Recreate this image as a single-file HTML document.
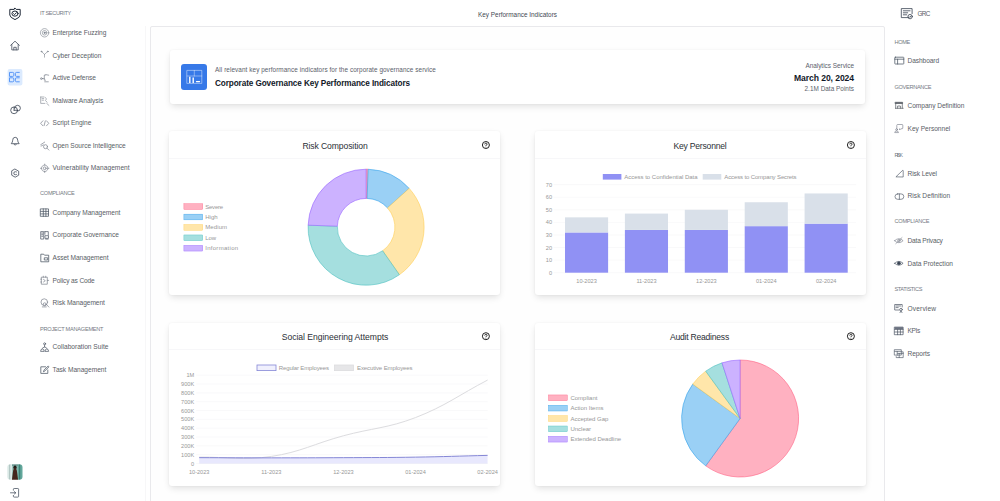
<!DOCTYPE html>
<html><head><meta charset="utf-8"><title>Key Performance Indicators</title>
<style>
html,body{margin:0;padding:0;}
body{width:1000px;height:501px;position:relative;overflow:hidden;background:#fff;font-family:"Liberation Sans", sans-serif;}
.t{position:absolute;white-space:pre;line-height:10px;height:10px;font-family:"Liberation Sans", sans-serif;}
.abs{position:absolute;}
.card{position:absolute;background:#fff;border-radius:3px;box-shadow:0 3px 7px -1px rgba(0,0,0,0.13),0 0 2px rgba(0,0,0,0.05);}
svg{position:absolute;overflow:visible;}

</style></head><body>
<div class="abs" style="left:150px;top:26px;width:733px;height:480px;background:#fefefe;border:1px solid #e9e9ec;border-radius:2px 2px 0 0;"></div>
<div class="abs" style="left:145px;top:26px;width:1px;height:480px;background:#f7f7f8;"></div>
<div class="card" style="left:169.5px;top:50px;width:695.5px;height:54px;"></div>
<div class="abs" style="left:181px;top:64px;width:26px;height:26px;background:#3779e8;border-radius:3px;"></div>
<div class="card" style="left:169.3px;top:131.0px;width:330.5px;height:164.0px;"></div>
<div class="abs" style="left:169.3px;top:157.5px;width:330.5px;height:1px;background:#f7f7f9;"></div>
<div class="card" style="left:535.0px;top:131.0px;width:330.5px;height:164.0px;"></div>
<div class="abs" style="left:535.0px;top:157.5px;width:330.5px;height:1px;background:#f7f7f9;"></div>
<div class="card" style="left:169.3px;top:322.6px;width:330.5px;height:163.4px;"></div>
<div class="abs" style="left:169.3px;top:349.1px;width:330.5px;height:1px;background:#f7f7f9;"></div>
<div class="card" style="left:535.0px;top:322.6px;width:330.5px;height:163.4px;"></div>
<div class="abs" style="left:535.0px;top:349.1px;width:330.5px;height:1px;background:#f7f7f9;"></div>
<svg width="1000" height="501" viewBox="0 0 1000 501" style="left:0;top:0"><path d="M366.10 169.20 A58.00 58.00 0 0 1 368.12 169.24 L367.11 198.42 A28.80 28.80 0 0 0 366.10 198.40 Z" fill="#ffb1c1" stroke="#ff6384" stroke-width="0.6" stroke-linejoin="round"/><path d="M368.12 169.24 A58.00 58.00 0 0 1 409.20 188.39 L387.50 207.93 A28.80 28.80 0 0 0 367.11 198.42 Z" fill="#9ad0f5" stroke="#36a2eb" stroke-width="0.6" stroke-linejoin="round"/><path d="M409.20 188.39 A58.00 58.00 0 0 1 399.37 274.71 L382.62 250.79 A28.80 28.80 0 0 0 387.50 207.93 Z" fill="#ffe6aa" stroke="#ffce56" stroke-width="0.6" stroke-linejoin="round"/><path d="M399.37 274.71 A58.00 58.00 0 0 1 308.14 225.18 L337.32 226.19 A28.80 28.80 0 0 0 382.62 250.79 Z" fill="#a5dfdf" stroke="#4bc0c0" stroke-width="0.6" stroke-linejoin="round"/><path d="M308.14 225.18 A58.00 58.00 0 0 1 366.10 169.20 L366.10 198.40 A28.80 28.80 0 0 0 337.32 226.19 Z" fill="#ccb2ff" stroke="#9966ff" stroke-width="0.6" stroke-linejoin="round"/><rect x="183.90" y="203.75" width="18.80" height="5.70" fill="#ffb1c1" stroke="#ff6384" stroke-width="0.4"/><rect x="183.90" y="214.15" width="18.80" height="5.70" fill="#9ad0f5" stroke="#36a2eb" stroke-width="0.4"/><rect x="183.90" y="224.55" width="18.80" height="5.70" fill="#ffe6aa" stroke="#ffce56" stroke-width="0.4"/><rect x="183.90" y="234.95" width="18.80" height="5.70" fill="#a5dfdf" stroke="#4bc0c0" stroke-width="0.4"/><rect x="183.90" y="245.35" width="18.80" height="5.70" fill="#ccb2ff" stroke="#9966ff" stroke-width="0.4"/><path d="M740.10 418.50 L740.10 360.00 A58.50 58.50 0 1 1 705.71 465.83 Z" fill="#ffb1c1" stroke="#ff6384" stroke-width="0.6" stroke-linejoin="round"/><path d="M740.10 418.50 L705.71 465.83 A58.50 58.50 0 0 1 692.77 384.11 Z" fill="#9ad0f5" stroke="#36a2eb" stroke-width="0.6" stroke-linejoin="round"/><path d="M740.10 418.50 L692.77 384.11 A58.50 58.50 0 0 1 705.71 371.17 Z" fill="#ffe6aa" stroke="#ffce56" stroke-width="0.6" stroke-linejoin="round"/><path d="M740.10 418.50 L705.71 371.17 A58.50 58.50 0 0 1 722.02 362.86 Z" fill="#a5dfdf" stroke="#4bc0c0" stroke-width="0.6" stroke-linejoin="round"/><path d="M740.10 418.50 L722.02 362.86 A58.50 58.50 0 0 1 740.10 360.00 Z" fill="#ccb2ff" stroke="#9966ff" stroke-width="0.6" stroke-linejoin="round"/><rect x="548.50" y="394.95" width="18.80" height="5.70" fill="#ffb1c1" stroke="#ff6384" stroke-width="0.4"/><rect x="548.50" y="405.30" width="18.80" height="5.70" fill="#9ad0f5" stroke="#36a2eb" stroke-width="0.4"/><rect x="548.50" y="415.65" width="18.80" height="5.70" fill="#ffe6aa" stroke="#ffce56" stroke-width="0.4"/><rect x="548.50" y="426.00" width="18.80" height="5.70" fill="#a5dfdf" stroke="#4bc0c0" stroke-width="0.4"/><rect x="548.50" y="436.35" width="18.80" height="5.70" fill="#ccb2ff" stroke="#9966ff" stroke-width="0.4"/><line x1="553.60" y1="272.70" x2="856.10" y2="272.70" stroke="#f3f3f5" stroke-width="0.5"/><line x1="553.60" y1="260.12" x2="856.10" y2="260.12" stroke="#f3f3f5" stroke-width="0.5"/><line x1="553.60" y1="247.54" x2="856.10" y2="247.54" stroke="#f3f3f5" stroke-width="0.5"/><line x1="553.60" y1="234.96" x2="856.10" y2="234.96" stroke="#f3f3f5" stroke-width="0.5"/><line x1="553.60" y1="222.38" x2="856.10" y2="222.38" stroke="#f3f3f5" stroke-width="0.5"/><line x1="553.60" y1="209.80" x2="856.10" y2="209.80" stroke="#f3f3f5" stroke-width="0.5"/><line x1="553.60" y1="197.22" x2="856.10" y2="197.22" stroke="#f3f3f5" stroke-width="0.5"/><line x1="553.60" y1="184.64" x2="856.10" y2="184.64" stroke="#f3f3f5" stroke-width="0.5"/><rect x="564.99" y="232.44" width="43.13" height="40.26" fill="#9091f4"/><rect x="564.99" y="217.35" width="43.13" height="15.10" fill="#d9e0e9"/><rect x="624.89" y="229.93" width="43.13" height="42.77" fill="#9091f4"/><rect x="624.89" y="213.57" width="43.13" height="16.35" fill="#d9e0e9"/><rect x="684.79" y="229.93" width="43.13" height="42.77" fill="#9091f4"/><rect x="684.79" y="209.80" width="43.13" height="20.13" fill="#d9e0e9"/><rect x="744.69" y="226.15" width="43.13" height="46.55" fill="#9091f4"/><rect x="744.69" y="202.25" width="43.13" height="23.90" fill="#d9e0e9"/><rect x="804.59" y="223.64" width="43.13" height="49.06" fill="#9091f4"/><rect x="804.59" y="193.45" width="43.13" height="30.19" fill="#d9e0e9"/><rect x="602.8" y="174" width="18.6" height="5.6" fill="#9091f4"/><rect x="702.7" y="174" width="18.6" height="5.6" fill="#d9e0e9"/><line x1="196.20" y1="463.50" x2="487.60" y2="463.50" stroke="#f3f3f5" stroke-width="0.5"/><line x1="196.20" y1="454.67" x2="487.60" y2="454.67" stroke="#f3f3f5" stroke-width="0.5"/><line x1="196.20" y1="445.84" x2="487.60" y2="445.84" stroke="#f3f3f5" stroke-width="0.5"/><line x1="196.20" y1="437.01" x2="487.60" y2="437.01" stroke="#f3f3f5" stroke-width="0.5"/><line x1="196.20" y1="428.18" x2="487.60" y2="428.18" stroke="#f3f3f5" stroke-width="0.5"/><line x1="196.20" y1="419.35" x2="487.60" y2="419.35" stroke="#f3f3f5" stroke-width="0.5"/><line x1="196.20" y1="410.52" x2="487.60" y2="410.52" stroke="#f3f3f5" stroke-width="0.5"/><line x1="196.20" y1="401.69" x2="487.60" y2="401.69" stroke="#f3f3f5" stroke-width="0.5"/><line x1="196.20" y1="392.86" x2="487.60" y2="392.86" stroke="#f3f3f5" stroke-width="0.5"/><line x1="196.20" y1="384.03" x2="487.60" y2="384.03" stroke="#f3f3f5" stroke-width="0.5"/><line x1="196.20" y1="375.20" x2="487.60" y2="375.20" stroke="#f3f3f5" stroke-width="0.5"/><path d="M199.20 457.14 C228.04 456.86 243.03 460.63 271.30 456.44 C300.71 452.08 314.44 443.58 343.40 435.77 C372.12 428.04 387.94 428.23 415.50 417.58 C445.62 405.94 458.76 395.07 487.60 380.06" fill="none" stroke="#dcdcdf" stroke-width="1"/><path d="M199.20 457.67 C228.04 457.74 242.46 457.85 271.30 457.85 C300.14 457.85 314.56 457.81 343.40 457.67 C372.24 457.53 386.66 457.60 415.50 457.14 C444.34 456.68 458.76 456.08 487.60 455.38 L487.60 463.50 L199.20 463.50 Z" fill="rgba(99,102,241,0.15)" stroke="none"/><path d="M199.20 457.67 C228.04 457.74 242.46 457.85 271.30 457.85 C300.14 457.85 314.56 457.81 343.40 457.67 C372.24 457.53 386.66 457.60 415.50 457.14 C444.34 456.68 458.76 456.08 487.60 455.38" fill="none" stroke="#8587d6" stroke-width="1"/><rect x="257" y="365" width="19" height="5.6" fill="#f0f0fd" stroke="#8587d6" stroke-width="0.8"/><rect x="334.5" y="365" width="19" height="5.6" fill="#e6e6e8" stroke="#dcdcdf" stroke-width="0.8"/><circle cx="485.90" cy="145.00" r="3.5" fill="none" stroke="#222" stroke-width="1.0"/><path d="M484.70 144.40 q0 -1.3 1.2 -1.3 q1.2 0 1.2 1.1 q0 0.8 -1.2 1.2 v0.6" fill="none" stroke="#222" stroke-width="0.85"/><circle cx="485.90" cy="147.00" r="0.45" fill="#222"/><circle cx="850.90" cy="145.00" r="3.5" fill="none" stroke="#222" stroke-width="1.0"/><path d="M849.70 144.40 q0 -1.3 1.2 -1.3 q1.2 0 1.2 1.1 q0 0.8 -1.2 1.2 v0.6" fill="none" stroke="#222" stroke-width="0.85"/><circle cx="850.90" cy="147.00" r="0.45" fill="#222"/><circle cx="485.90" cy="336.20" r="3.5" fill="none" stroke="#222" stroke-width="1.0"/><path d="M484.70 335.60 q0 -1.3 1.2 -1.3 q1.2 0 1.2 1.1 q0 0.8 -1.2 1.2 v0.6" fill="none" stroke="#222" stroke-width="0.85"/><circle cx="485.90" cy="338.20" r="0.45" fill="#222"/><circle cx="850.90" cy="336.20" r="3.5" fill="none" stroke="#222" stroke-width="1.0"/><path d="M849.70 335.60 q0 -1.3 1.2 -1.3 q1.2 0 1.2 1.1 q0 0.8 -1.2 1.2 v0.6" fill="none" stroke="#222" stroke-width="0.85"/><circle cx="850.90" cy="338.20" r="0.45" fill="#222"/></svg>
<svg width="1000" height="501" viewBox="0 0 1000 501" style="left:0;top:0"><g transform="translate(9.00 7.80)" fill="none" stroke="#1f2937" stroke-width="1.0" stroke-linecap="round" stroke-linejoin="round" ><path d="M6 0.4 L7.2 1.6 L11.2 1.6 L11.2 7.2 Q11.2 9.6 6 11.8 Q0.8 9.6 0.8 7.2 L0.8 1.6 L4.8 1.6 Z"/><ellipse cx="6" cy="5.8" rx="3.1" ry="2.6"/><path d="M4.6 5.9 L5.6 6.8 L7.5 4.8"/></g><g transform="translate(10.20 40.70)" fill="none" stroke="#4b5563" stroke-width="0.85" stroke-linecap="round" stroke-linejoin="round" ><path d="M0.4 4.6 L4.8 0.5 L9.2 4.6 M1.6 3.8 V9.2 H8 V3.8 M3.6 9.2 V6.6 H6 V9.2"/></g><rect x="7.6" y="69" width="14.8" height="16.4" rx="2" fill="#dbeafe"/><g transform="translate(9.90 72.40)" fill="none" stroke="#4a8df6" stroke-width="0.9" stroke-linecap="round" stroke-linejoin="round" ><path d="M0.0 0.0 h2.8 q1.1 0 1.1 1.1 v1.8 q0 1.1 -1.1 1.1 h-2.8 Z"/><path d="M9.4 0.0 h-2.8 q-1.1 0 -1.1 1.1 v1.8 q0 1.1 1.1 1.1 h2.8"/><path d="M0.0 5.4 h2.8 q1.1 0 1.1 1.1 v1.8 q0 1.1 -1.1 1.1 h-2.8 Z"/><path d="M9.4 5.4 h-2.8 q-1.1 0 -1.1 1.1 v1.8 q0 1.1 1.1 1.1 h2.8"/></g><g transform="translate(10.20 104.90)" fill="none" stroke="#374151" stroke-width="0.8" stroke-linecap="round" stroke-linejoin="round" ><circle cx="3.9" cy="5.4" r="3.4"/><path d="M4.4 3.4 A2.9 2.9 0 1 1 7.2 6.2 M3.9 5.4 V2.4 M3.9 5.4 H7"/></g><g transform="translate(10.90 136.80)" fill="none" stroke="#4b5563" stroke-width="0.85" stroke-linecap="round" stroke-linejoin="round" ><path d="M0.6 6.6 Q1.8 5.4 1.8 3.4 Q1.8 0.5 4.3 0.5 Q6.8 0.5 6.8 3.4 Q6.8 5.4 8 6.6 Z M3.2 7.8 Q4.3 8.8 5.4 7.8"/></g><g transform="translate(10.90 168.90)" fill="none" stroke="#4b5563" stroke-width="0.85" stroke-linecap="round" stroke-linejoin="round" ><path d="M4.3 0.3 L7.8 2.3 L7.8 6.3 L4.3 8.3 L0.8 6.3 L0.8 2.3 Z"/><path d="M5.6 3 Q4.3 2.4 3.2 3.2 Q2.6 4.3 3.2 5.4 Q4.3 6.2 5.6 5.6"/></g><defs><clipPath id="av"><rect x="7.3" y="464.2" width="15.2" height="15.6" rx="3.2"/></clipPath><filter id="bl" x="-20%" y="-20%" width="140%" height="140%"><feGaussianBlur stdDeviation="0.55"/></filter></defs><g clip-path="url(#av)"><g filter="url(#bl)"><rect x="5" y="462" width="20" height="20" fill="#9cc7be"/><rect x="5" y="462" width="7" height="20" fill="#dbe9e6"/><rect x="9.2" y="462" width="1" height="20" fill="#a9bfbc"/><rect x="17.6" y="462" width="8" height="20" fill="#62a79b"/><rect x="19" y="462" width="1.2" height="20" fill="#3f7f75"/><rect x="12" y="463" width="6" height="3" fill="#6f9a94"/><ellipse cx="15" cy="467.6" rx="1.7" ry="2.2" fill="#1f1a18"/><path d="M15 467 Q13.2 469 12.8 473 L11.8 481 H18.2 L17.2 473 Q16.8 469 15 467 Z" fill="#45261c"/></g></g><g transform="translate(10.00 488.00)" fill="none" stroke="#4b5563" stroke-width="0.8" stroke-linecap="round" stroke-linejoin="round" ><path d="M3.4 2.2 V1.2 Q3.4 0.5 4.2 0.5 H7.8 Q8.6 0.5 8.6 1.2 V8.4 Q8.6 9.1 7.8 9.1 H4.2 Q3.4 9.1 3.4 8.4 V7.4"/><path d="M0.5 4.8 H5.6 M4.4 3.6 L5.8 4.8 L4.4 6"/></g><g transform="translate(40.10 28.20)" fill="none" stroke="#7b818c" stroke-width="0.6" stroke-linecap="round" stroke-linejoin="round" ><circle cx="4.5" cy="4.6" r="4.2"/><circle cx="4.5" cy="4.6" r="2.3"/><circle cx="4.5" cy="4.6" r="0.7" fill="#7b818c"/></g><g transform="translate(40.10 50.80)" fill="none" stroke="#7b818c" stroke-width="0.6" stroke-linecap="round" stroke-linejoin="round" ><path d="M1.6 0.9 L4.4 3.6 L7.4 0.9 M4.4 3.6 V6.4"/><circle cx="1.3" cy="0.7" r="0.5"/><circle cx="7.7" cy="0.7" r="0.5"/></g><g transform="translate(40.10 73.40)" fill="none" stroke="#7b818c" stroke-width="0.7" stroke-linecap="round" stroke-linejoin="round" ><circle cx="1.3" cy="5.2" r="0.9"/><path d="M2.4 5.2 H4 M5.6 1.6 H4.2 V6.8 H5.4 M5.8 1.2 L8.6 1.8 M4.6 8.4 H8.2"/></g><g transform="translate(40.10 96.00)" fill="none" stroke="#7b818c" stroke-width="0.6" stroke-linecap="round" stroke-linejoin="round" ><path d="M0.6 1 H3.4 M4.6 1 L6 2.4 V3.6 M0.6 1 V7.4 H4.8 M2 2.6 H3.6 M2 4.2 H3.4 M5.2 4.4 L7 6.2 M6.6 7.4 L8.8 9.4"/></g><g transform="translate(40.10 118.60)" fill="none" stroke="#7b818c" stroke-width="0.7" stroke-linecap="round" stroke-linejoin="round" ><path d="M2.8 2.2 L0.5 4.7 L2.8 7.2 M6.4 2.2 L8.7 4.7 L6.4 7.2 M5.2 2.4 L4 7"/></g><g transform="translate(40.10 141.10)" fill="none" stroke="#7b818c" stroke-width="0.7" stroke-linecap="round" stroke-linejoin="round" ><path d="M0.6 3.6 L4.6 1 M1 5 L3.2 3.8"/><circle cx="5.4" cy="5.6" r="2"/><path d="M6.9 7.1 L8.8 9"/></g><g transform="translate(40.10 163.70)" fill="none" stroke="#7b818c" stroke-width="0.7" stroke-linecap="round" stroke-linejoin="round" ><circle cx="4.6" cy="4.6" r="3.2" stroke-dasharray="1.6 0.9"/><circle cx="4.6" cy="4.6" r="1.4"/><path d="M4.6 0.4 V1.4 M4.6 7.8 V8.8 M0.4 4.6 H1.4 M7.8 4.6 H8.8"/></g><g transform="translate(40.30 208.30)" fill="none" stroke="#4b5563" stroke-width="0.75" stroke-linecap="round" stroke-linejoin="round" ><rect x="0.4" y="0.6" width="7.8" height="7.4"/><path d="M3 0.6 V8 M5.6 0.6 V8 M0.4 3.1 H8.2 M0.4 5.6 H8.2"/></g><g transform="translate(40.30 231.10)" fill="none" stroke="#4b5563" stroke-width="0.7" stroke-linecap="round" stroke-linejoin="round" ><path d="M0.4 7.6 V0.5 H3.4 V7.6 Z M4.6 0.5 H8 V4 M4.6 0.5 V3.2"/><rect x="5" y="4.6" width="3.2" height="2.6"/><path d="M1.4 2 H2.4 M1.4 3.6 H2.4 M1.4 5.2 H2.4 M5.4 8 H7.8"/></g><g transform="translate(40.30 253.40)" fill="none" stroke="#4b5563" stroke-width="0.75" stroke-linecap="round" stroke-linejoin="round" ><path d="M0.5 8 V0.8 H3.4 L4.2 1.8 H8.4 V8 Z"/><rect x="4.4" y="4.4" width="3" height="2.2"/></g><g transform="translate(40.30 275.80)" fill="none" stroke="#7b818c" stroke-width="0.7" stroke-linecap="round" stroke-linejoin="round" ><path d="M1.4 1.4 H7 V8.4 H1.4 Z M3 0.4 V1.4 M5.4 0.4 V1.4 M0.4 3.4 H1.4 M0.4 6.2 H1.4 M7 4.6 H8.4"/><path d="M3.2 3.6 L5 4.9 L3.2 6.2"/></g><g transform="translate(40.30 298.30)" fill="none" stroke="#7b818c" stroke-width="0.7" stroke-linecap="round" stroke-linejoin="round" ><circle cx="4" cy="3.8" r="3.3"/><circle cx="4.4" cy="6" r="1.5"/><path d="M6.4 6.4 L8.6 8.8 M2 8.6 H6"/></g><g transform="translate(40.20 342.40)" fill="none" stroke="#4b5563" stroke-width="0.7" stroke-linecap="round" stroke-linejoin="round" ><circle cx="4.4" cy="1.4" r="1"/><path d="M4.4 2.6 V4.6 M2 6 L4.4 4.4 L6.8 6"/><path d="M0.4 8.6 Q0.4 6.6 2.2 6.6 Q4 6.6 4 8.6 Z M4.8 8.6 Q4.8 6.6 6.6 6.6 Q8.4 6.6 8.4 8.6 Z"/></g><g transform="translate(40.20 365.40)" fill="none" stroke="#4b5563" stroke-width="0.75" stroke-linecap="round" stroke-linejoin="round" ><path d="M5.4 1.4 H0.6 V8 H7.6 V4.6"/><path d="M3.4 6 L4 4.4 L8 0.6 L8.8 1.4 L4.8 5.4 Z"/></g><g transform="translate(900.70 8.00)" fill="none" stroke="#374151" stroke-width="0.8" stroke-linecap="round" stroke-linejoin="round" ><path d="M8 9.6 H0.6 V0.6 H11.4 V5.6"/><path d="M2.6 2.8 H9.4 M2.6 4.8 H7 M2.6 6.8 H6"/><circle cx="9.4" cy="8.6" r="2.2"/><path d="M8.4 8.6 L9.2 9.4 L10.4 7.8"/></g><g transform="translate(894.40 56.80)" fill="none" stroke="#4b5563" stroke-width="0.75" stroke-linecap="round" stroke-linejoin="round" ><rect x="0.4" y="0.4" width="9" height="6.8" rx="0.5"/><path d="M0.4 2.4 H9.4 M3.2 2.4 V7.2"/></g><g transform="translate(895.00 101.80)" fill="none" stroke="#555a62" stroke-width="0.7" stroke-linecap="round" stroke-linejoin="round" ><path d="M0.4 0.5 H7.6 V1.7 H0.4 Z" fill="#555a62"/><path d="M0.7 1.8 V6.4 M7.3 1.8 V6.4 M0.4 6.5 H8.2 M2.6 6.4 V4.2 H5.4 V6.4"/></g><g transform="translate(894.20 124.00)" fill="none" stroke="#7b818c" stroke-width="0.65" stroke-linecap="round" stroke-linejoin="round" ><path d="M2.6 4.8 V1.2 Q2.6 0.5 3.4 0.5 H7.8 Q8.6 0.5 8.6 1.2 V4 Q8.6 4.8 7.8 4.8 H6.6 L5.4 6 V4.8"/><circle cx="2.4" cy="5.6" r="0.9"/><path d="M0.5 8.2 Q0.5 7 2.4 7 Q4.3 7 4.3 8.2 Z"/></g><g transform="translate(895.60 169.60)" fill="none" stroke="#4b5563" stroke-width="0.65" stroke-linecap="round" stroke-linejoin="round" ><path d="M0.6 7 L7 0.8 Q7.6 0.4 7.6 1.2 V7 Z"/></g><g transform="translate(894.60 193.40)" fill="none" stroke="#4b5563" stroke-width="0.65" stroke-linecap="round" stroke-linejoin="round" ><rect x="0.4" y="0.5" width="8.8" height="5.4" rx="2.7"/><path d="M4.8 0.6 V5.8"/></g><g transform="translate(894.20 236.40)" fill="none" stroke="#7b818c" stroke-width="0.65" stroke-linecap="round" stroke-linejoin="round" ><path d="M0.5 4.3 Q4.6 0.2 8.9 4.3 Q4.6 8.4 0.5 4.3 Z M1.6 7.2 L7.8 1.2"/><circle cx="4.7" cy="4.3" r="1.2"/></g><g transform="translate(894.20 259.00)" fill="none" stroke="#4b5563" stroke-width="0.7" stroke-linecap="round" stroke-linejoin="round" ><path d="M0.5 4.3 Q4.6 0.4 8.9 4.3 Q4.6 8.2 0.5 4.3 Z"/><circle cx="4.7" cy="4.3" r="1.5" fill="#374151"/></g><g transform="translate(894.20 304.00)" fill="none" stroke="#4b5563" stroke-width="0.7" stroke-linecap="round" stroke-linejoin="round" ><path d="M5 6 H0.5 V0.5 H8 V3"/><path d="M1.8 2 H6.4 M1.8 3.6 H4"/><circle cx="6.8" cy="5.6" r="1.3"/><path d="M5.8 8.6 L6.8 6.9 L7.8 8.6"/></g><g transform="translate(894.20 326.60)" fill="none" stroke="#4b5563" stroke-width="0.7" stroke-linecap="round" stroke-linejoin="round" ><rect x="0.5" y="0.5" width="8.4" height="7.6"/><path d="M0.5 2.8 H8.9 M3.4 2.8 V8.1 M6.2 2.8 V8.1 M0.5 5.4 H8.9"/><path d="M0.5 0.5 H8.9 V2.8 H0.5 Z" fill="#6b7280" stroke="none"/></g><g transform="translate(894.20 349.20)" fill="none" stroke="#4b5563" stroke-width="0.65" stroke-linecap="round" stroke-linejoin="round" ><rect x="0.5" y="0.5" width="6.6" height="5.4"/><path d="M2 7.4 V8.4 H9 V2.6 H7.8 M0.5 2.2 H7.1 M3 2.2 V5.9 M3.4 4.2 H9 M5 4.2 V8.4"/></g><g transform="translate(186.80 70.00)" fill="none" stroke="#fff" stroke-width="0.8" stroke-linecap="round" stroke-linejoin="round" ><rect x="0.4" y="0.4" width="14.6" height="13" stroke="rgba(255,255,255,0.55)"/><path d="M7.5 0.4 V6 M0.4 6 H15" stroke="rgba(255,255,255,0.5)"/><path d="M3 6.8 V13 M6.4 7.4 V13" stroke="#fff" stroke-width="1.4" stroke-linecap="butt"/><path d="M9.6 11.6 H12.8" stroke="#fff" stroke-width="1.1"/></g></svg>
<div class="t" style="left:40.00px;top:8.40px;font-size:5.6px;color:#757a84;letter-spacing:-0.338px;">IT SECURITY</div>
<div class="t" style="left:52.60px;top:27.70px;font-size:6.6px;color:#595e66;letter-spacing:-0.071px;">Enterprise Fuzzing</div>
<div class="t" style="left:52.60px;top:50.90px;font-size:6.6px;color:#595e66;letter-spacing:-0.028px;">Cyber Deception</div>
<div class="t" style="left:52.60px;top:72.90px;font-size:6.6px;color:#595e66;letter-spacing:-0.083px;">Active Defense</div>
<div class="t" style="left:52.60px;top:95.50px;font-size:6.6px;color:#595e66;letter-spacing:-0.015px;">Malware Analysis</div>
<div class="t" style="left:52.60px;top:118.10px;font-size:6.6px;color:#595e66;letter-spacing:-0.040px;">Script Engine</div>
<div class="t" style="left:52.60px;top:140.60px;font-size:6.6px;color:#595e66;letter-spacing:-0.039px;">Open Source Intelligence</div>
<div class="t" style="left:52.60px;top:163.20px;font-size:6.6px;color:#595e66;letter-spacing:0.046px;">Vulnerability Management</div>
<div class="t" style="left:52.60px;top:207.60px;font-size:6.6px;color:#595e66;letter-spacing:-0.047px;">Company Management</div>
<div class="t" style="left:52.60px;top:230.10px;font-size:6.6px;color:#595e66;letter-spacing:-0.044px;">Corporate Governance</div>
<div class="t" style="left:52.60px;top:252.70px;font-size:6.6px;color:#595e66;letter-spacing:-0.063px;">Asset Management</div>
<div class="t" style="left:52.60px;top:275.80px;font-size:6.6px;color:#595e66;letter-spacing:-0.142px;">Policy as Code</div>
<div class="t" style="left:52.60px;top:297.80px;font-size:6.6px;color:#595e66;letter-spacing:-0.063px;">Risk Management</div>
<div class="t" style="left:52.60px;top:342.40px;font-size:6.6px;color:#595e66;letter-spacing:0.004px;">Collaboration Suite</div>
<div class="t" style="left:52.60px;top:365.00px;font-size:6.6px;color:#595e66;letter-spacing:-0.013px;">Task Management</div>
<div class="t" style="left:40.00px;top:188.40px;font-size:5.6px;color:#757a84;letter-spacing:-0.250px;">COMPLIANCE</div>
<div class="t" style="left:40.00px;top:323.60px;font-size:5.6px;color:#757a84;letter-spacing:-0.242px;">PROJECT MANAGEMENT</div>
<div class="t" style="left:478.00px;top:9.50px;font-size:6.4px;color:#444a53;letter-spacing:0.005px;">Key Performance Indicators</div>
<div class="t" style="left:917.40px;top:8.70px;font-size:6.4px;color:#595e66;letter-spacing:-0.634px;">GRC</div>
<div class="t" style="left:894.40px;top:37.00px;font-size:5.6px;color:#757a84;letter-spacing:-0.295px;">HOME</div>
<div class="t" style="left:894.40px;top:81.50px;font-size:5.6px;color:#757a84;letter-spacing:-0.290px;">GOVERNANCE</div>
<div class="t" style="left:894.40px;top:149.50px;font-size:5.6px;color:#757a84;letter-spacing:-1.466px;">RISK</div>
<div class="t" style="left:894.40px;top:216.30px;font-size:5.6px;color:#757a84;letter-spacing:-0.200px;">COMPLIANCE</div>
<div class="t" style="left:894.40px;top:284.20px;font-size:5.6px;color:#757a84;letter-spacing:-0.390px;">STATISTICS</div>
<div class="t" style="left:907.50px;top:55.90px;font-size:6.6px;color:#595e66;letter-spacing:-0.085px;">Dashboard</div>
<div class="t" style="left:907.50px;top:100.90px;font-size:6.6px;color:#595e66;letter-spacing:-0.041px;">Company Definition</div>
<div class="t" style="left:907.50px;top:123.50px;font-size:6.6px;color:#595e66;letter-spacing:-0.007px;">Key Personnel</div>
<div class="t" style="left:907.50px;top:168.80px;font-size:6.6px;color:#595e66;letter-spacing:-0.092px;">Risk Level</div>
<div class="t" style="left:907.50px;top:191.30px;font-size:6.6px;color:#595e66;letter-spacing:0.043px;">Risk Definition</div>
<div class="t" style="left:907.50px;top:236.10px;font-size:6.6px;color:#595e66;letter-spacing:-0.183px;">Data Privacy</div>
<div class="t" style="left:907.50px;top:258.70px;font-size:6.6px;color:#595e66;letter-spacing:0.003px;">Data Protection</div>
<div class="t" style="left:907.50px;top:303.80px;font-size:6.6px;color:#595e66;letter-spacing:0.152px;">Overview</div>
<div class="t" style="left:907.50px;top:326.40px;font-size:6.6px;color:#595e66;letter-spacing:-0.359px;">KPIs</div>
<div class="t" style="left:907.50px;top:349.00px;font-size:6.6px;color:#595e66;letter-spacing:-0.085px;">Reports</div>
<div class="t" style="left:215.00px;top:64.60px;font-size:6.4px;color:#5b616b;letter-spacing:0.066px;">All relevant key performance indicators for the corporate governance service</div>
<div class="t" style="left:215.00px;top:78.80px;font-size:8.2px;color:#111827;font-weight:bold;letter-spacing:-0.101px;">Corporate Governance Key Performance Indicators</div>
<div class="t" style="left:805.40px;top:61.20px;font-size:6.4px;color:#5b616b;letter-spacing:-0.004px;">Analytics Service</div>
<div class="t" style="left:794.00px;top:72.80px;font-size:8.6px;color:#111827;font-weight:bold;letter-spacing:-0.083px;">March 20, 2024</div>
<div class="t" style="left:804.50px;top:83.80px;font-size:6.4px;color:#5b616b;letter-spacing:0.029px;">2.1M Data Points</div>
<div class="t" style="left:302.40px;top:141.10px;font-size:8.6px;color:#2b2f36;letter-spacing:-0.105px;">Risk Composition</div>
<div class="t" style="left:673.45px;top:141.10px;font-size:8.6px;color:#2b2f36;letter-spacing:-0.216px;">Key Personnel</div>
<div class="t" style="left:281.75px;top:332.00px;font-size:8.6px;color:#2b2f36;letter-spacing:-0.037px;">Social Engineering Attempts</div>
<div class="t" style="left:670.00px;top:332.00px;font-size:8.6px;color:#2b2f36;letter-spacing:-0.240px;">Audit Readiness</div>
<div class="t" style="left:205.20px;top:201.60px;font-size:6px;color:#979797;letter-spacing:-0.203px;">Severe</div>
<div class="t" style="left:205.20px;top:212.00px;font-size:6px;color:#979797;letter-spacing:0.039px;">High</div>
<div class="t" style="left:205.20px;top:222.40px;font-size:6px;color:#979797;letter-spacing:0.109px;">Medium</div>
<div class="t" style="left:205.20px;top:232.80px;font-size:6px;color:#979797;letter-spacing:-0.039px;">Low</div>
<div class="t" style="left:205.20px;top:243.20px;font-size:6px;color:#979797;letter-spacing:0.289px;">Information</div>
<div class="t" style="left:570.40px;top:392.80px;font-size:6px;color:#979797;">Compliant</div>
<div class="t" style="left:570.40px;top:403.15px;font-size:6px;color:#979797;">Action Items</div>
<div class="t" style="left:570.40px;top:413.50px;font-size:6px;color:#979797;">Accepted Gap</div>
<div class="t" style="left:570.40px;top:423.85px;font-size:6px;color:#979797;">Unclear</div>
<div class="t" style="left:570.40px;top:434.20px;font-size:6px;color:#979797;">Extended Deadline</div>
<div class="t" style="left:624.30px;top:171.60px;font-size:6px;color:#979797;letter-spacing:-0.016px;">Access to Confidential Data</div>
<div class="t" style="left:724.30px;top:171.60px;font-size:6px;color:#979797;letter-spacing:-0.127px;">Access to Company Secrets</div>
<div class="t" style="left:548.88px;top:267.70px;font-size:5.6px;color:#979797;">0</div>
<div class="t" style="left:545.77px;top:255.12px;font-size:5.6px;color:#979797;">10</div>
<div class="t" style="left:545.77px;top:242.54px;font-size:5.6px;color:#979797;">20</div>
<div class="t" style="left:545.77px;top:229.96px;font-size:5.6px;color:#979797;">30</div>
<div class="t" style="left:545.77px;top:217.38px;font-size:5.6px;color:#979797;">40</div>
<div class="t" style="left:545.77px;top:204.80px;font-size:5.6px;color:#979797;">50</div>
<div class="t" style="left:545.77px;top:192.22px;font-size:5.6px;color:#979797;">60</div>
<div class="t" style="left:545.77px;top:179.64px;font-size:5.6px;color:#979797;">70</div>
<div class="t" style="left:576.28px;top:276.20px;font-size:5.6px;color:#979797;">10-2023</div>
<div class="t" style="left:636.39px;top:276.20px;font-size:5.6px;color:#979797;">11-2023</div>
<div class="t" style="left:696.08px;top:276.20px;font-size:5.6px;color:#979797;">12-2023</div>
<div class="t" style="left:755.98px;top:276.20px;font-size:5.6px;color:#979797;">01-2024</div>
<div class="t" style="left:815.88px;top:276.20px;font-size:5.6px;color:#979797;">02-2024</div>
<div class="t" style="left:278.80px;top:362.70px;font-size:6px;color:#979797;letter-spacing:-0.139px;">Regular Employees</div>
<div class="t" style="left:357.00px;top:362.70px;font-size:6px;color:#979797;letter-spacing:-0.104px;">Executive Employees</div>
<div class="t" style="left:191.07px;top:458.50px;font-size:5.6px;color:#979797;">0</div>
<div class="t" style="left:181.12px;top:449.67px;font-size:5.6px;color:#979797;">100K</div>
<div class="t" style="left:181.12px;top:440.84px;font-size:5.6px;color:#979797;">200K</div>
<div class="t" style="left:181.12px;top:432.01px;font-size:5.6px;color:#979797;">300K</div>
<div class="t" style="left:181.12px;top:423.18px;font-size:5.6px;color:#979797;">400K</div>
<div class="t" style="left:181.12px;top:414.35px;font-size:5.6px;color:#979797;">500K</div>
<div class="t" style="left:181.12px;top:405.52px;font-size:5.6px;color:#979797;">600K</div>
<div class="t" style="left:181.12px;top:396.69px;font-size:5.6px;color:#979797;">700K</div>
<div class="t" style="left:181.12px;top:387.86px;font-size:5.6px;color:#979797;">800K</div>
<div class="t" style="left:181.12px;top:379.03px;font-size:5.6px;color:#979797;">900K</div>
<div class="t" style="left:186.42px;top:370.20px;font-size:5.6px;color:#979797;">1M</div>
<div class="t" style="left:188.93px;top:467.30px;font-size:5.6px;color:#979797;">10-2023</div>
<div class="t" style="left:261.24px;top:467.30px;font-size:5.6px;color:#979797;">11-2023</div>
<div class="t" style="left:333.13px;top:467.30px;font-size:5.6px;color:#979797;">12-2023</div>
<div class="t" style="left:405.23px;top:467.30px;font-size:5.6px;color:#979797;">01-2024</div>
<div class="t" style="left:477.33px;top:467.30px;font-size:5.6px;color:#979797;">02-2024</div>
</body></html>
